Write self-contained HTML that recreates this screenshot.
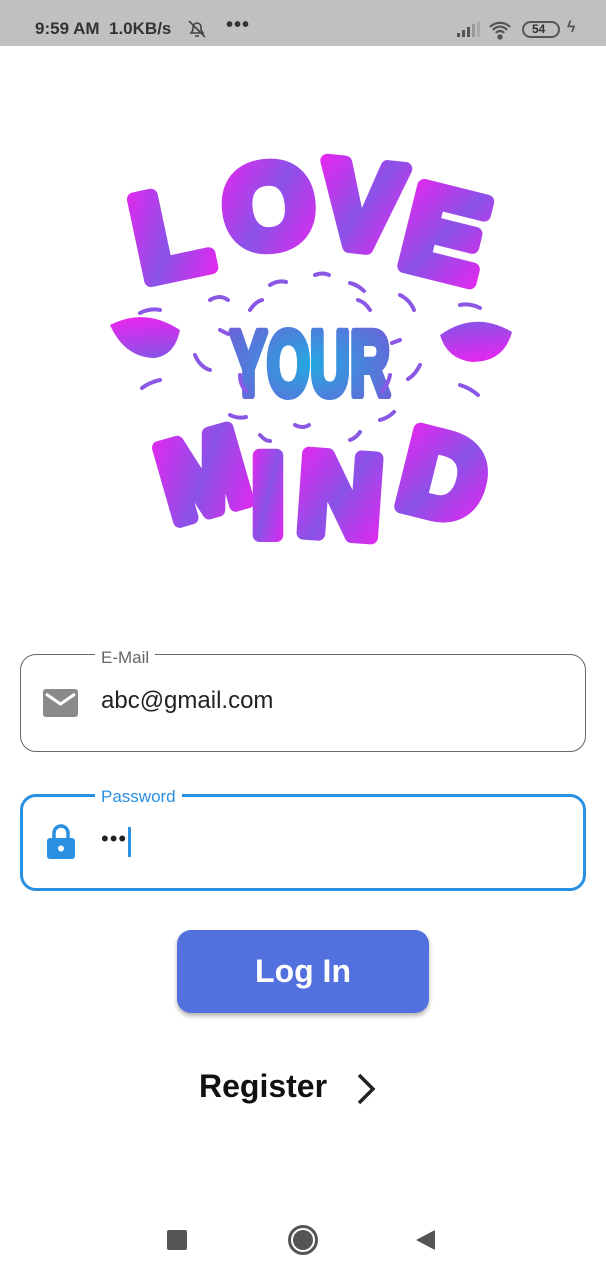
<!DOCTYPE html>
<html><head><meta charset="utf-8"><style>
*{margin:0;padding:0;box-sizing:border-box}
body{width:606px;height:1280px;background:#fff;position:relative;overflow:hidden;font-family:"Liberation Sans",sans-serif}
.abs{position:absolute}
.sb{left:0;top:0;width:606px;height:46px;background:#c0c0c0;color:#333;font-weight:bold;font-size:17px}
.box{left:20px;width:566px;height:98px;border-radius:16px}
.lbl{font-size:17px;background:#fff;padding:0 6px;line-height:18px}
</style></head><body>
<div class="abs sb">
 <span class="abs" style="left:35px;top:19px">9:59 AM&nbsp; 1.0KB/s</span>
 <svg class="abs" style="left:186px;top:18px" width="22" height="22" viewBox="0 0 22 22" fill="none" stroke="#444" stroke-width="1.6"><path d="M5 15h12l-2-3V9a4 4 0 0 0-8 0v3z M9 18h4 M3 3l16 16"/></svg>
 <span class="abs" style="left:226px;top:14px;font-size:20px;letter-spacing:1px">•••</span>
 <svg class="abs" style="left:456px;top:22px" width="26" height="16"><rect x="1" y="11" width="3" height="4" fill="#555"/><rect x="6" y="8" width="3" height="7" fill="#555"/><rect x="11" y="5" width="3" height="10" fill="#555"/><rect x="16" y="2" width="3" height="13" fill="#999"/><rect x="21" y="0" width="3" height="15" fill="#aaa"/></svg>
 <svg class="abs" style="left:488px;top:19px" width="28" height="22" fill="none" stroke="#555" stroke-width="2.2"><path d="M2 8a14 14 0 0 1 20 0 M5 11a9 9 0 0 1 14 0 M8 14a5 5 0 0 1 8 0"/><circle cx="12" cy="18" r="1.6" fill="#555"/></svg>
 <div class="abs" style="left:522px;top:21px;width:38px;height:17px;border:2px solid #555;border-radius:9px;font-size:12px;line-height:13px;padding-left:8px">54</div>
 <span class="abs" style="left:567px;top:19px;font-size:16px;color:#555">ϟ</span>
</div>

<svg class="abs" style="left:100px;top:125px" width="420" height="430" viewBox="0 0 420 430">
<defs>
<linearGradient id="g" x1="0" y1="0" x2="1" y2="1"><stop offset="0" stop-color="#ee22ee"/><stop offset="0.5" stop-color="#8a52e8"/><stop offset="1" stop-color="#ee22ee"/></linearGradient>
<radialGradient id="b" cx="0.5" cy="0.5" r="0.6"><stop offset="0" stop-color="#24a8e0"/><stop offset="1" stop-color="#6a63d8"/></radialGradient>
</defs>
<g font-family="Liberation Sans" font-weight="bold" fill="url(#g)" stroke="url(#g)" stroke-width="14" stroke-linejoin="round">
<text x="32" y="150" font-size="120" transform="rotate(-12 70 100)">L</text>
<text x="125" y="122" font-size="115" transform="rotate(-6 160 90)">O</text>
<text x="222" y="122" font-size="120" transform="rotate(6 260 80)">V</text>
<text x="305" y="150" font-size="120" transform="rotate(14 345 110)">E</text>
<text x="58" y="388" font-size="110" transform="rotate(-16 100 340)" textLength="85" lengthAdjust="spacingAndGlyphs">M</text>
<text x="152" y="410" font-size="115">I</text>
<text x="200" y="410" font-size="115" transform="rotate(4 240 350)">N</text>
<text x="305" y="392" font-size="115" transform="rotate(14 350 340)">D</text>
</g>
<g fill="url(#g)">
<path d="M10 200q35-18 70 5 -5 25 -25 28 -30 0 -45 -33z M340 210q35-25 72-3 -8 30 -40 30 -25 -3 -32 -27z"/>
</g>
<text x="130" y="270" font-family="Liberation Sans" font-weight="bold" font-size="92" fill="url(#b)" stroke="url(#b)" stroke-width="8" stroke-linejoin="round" textLength="160" lengthAdjust="spacingAndGlyphs">YOUR</text>
<g stroke="#8a58e4" stroke-width="4" fill="none" stroke-linecap="round">
<path d="M110 175q10-6 18 0 M300 170q10 5 14 15 M95 230q5 12 15 15 M320 240q-5 10-12 14 M130 290q8 4 16 2 M280 295q8-2 14-8 M170 160q8-5 16-3 M250 158q8 2 14 8 M120 205l8 4 M300 215l-8 3 M160 310q5 6 10 6 M250 315q6-2 10-8 M60 185q-10-2-20 3 M360 180q10-2 20 3 M60 255q-10 2-18 8 M360 260q10 3 18 10 M150 185q5-8 12-10 M270 185q-5-8-12-10 M140 250q0 10 6 16 M290 250q-2 10-8 16 M195 300q8 4 14 0 M215 150q8-3 14 0"/>
</g>
</svg>

<div class="abs box" style="top:654px;border:1.5px solid #666"></div>
<div class="abs lbl" style="left:95px;top:649px;color:#666">E-Mail</div>
<svg class="abs" style="left:43px;top:689px" width="35" height="28"><rect width="35" height="28" rx="3" fill="#8a8a8a"/><path d="M3 5l14.5 10L32 5" stroke="#fff" stroke-width="3" fill="none"/></svg>
<div class="abs" style="left:101px;top:687px;font-size:24px;color:#222">abc@gmail.com</div>

<div class="abs box" style="top:794px;border:3px solid #2a90e2;height:97px"></div>
<div class="abs lbl" style="left:95px;top:788px;color:#2a90e2">Password</div>
<svg class="abs" style="left:47px;top:824px" width="28" height="36"><path d="M7 14V9a7 7 0 0 1 14 0v5" stroke="#2a90e2" stroke-width="3.5" fill="none"/><rect x="0" y="14" width="28" height="21" rx="3" fill="#2a90e2"/><circle cx="14" cy="24.5" r="3" fill="#fff"/></svg>
<div class="abs" style="left:101px;top:826px;font-size:22px;color:#222;letter-spacing:1px">•••</div>
<div class="abs" style="left:128px;top:827px;width:3px;height:30px;background:#2a90e2"></div>

<div class="abs" style="left:177px;top:930px;width:252px;height:83px;background:#5271de;border-radius:14px;box-shadow:0 3px 5px rgba(0,0,0,.3);color:#fff;font-weight:bold;font-size:32px;text-align:center;line-height:83px">Log In</div>

<div class="abs" style="left:199px;top:1068px;font-size:32px;font-weight:bold;color:#111">Register</div>
<svg class="abs" style="left:354px;top:1072px" width="26" height="34"><path d="M5 3l14 14-14 14" stroke="#222" stroke-width="3.5" fill="none"/></svg>

<div class="abs" style="left:167px;top:1230px;width:20px;height:20px;background:#555;border-radius:2px"></div>
<div class="abs" style="left:288px;top:1225px;width:30px;height:30px;border:3px solid #555;border-radius:50%"></div>
<div class="abs" style="left:293px;top:1230px;width:20px;height:20px;background:#555;border-radius:50%"></div>
<svg class="abs" style="left:415px;top:1229px" width="22" height="22"><path d="M1 11L20 1v20z" fill="#555"/></svg>
</body></html>
